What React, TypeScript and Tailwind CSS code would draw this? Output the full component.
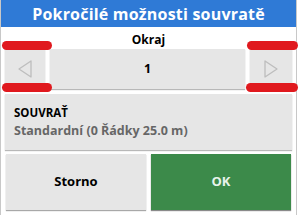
function Triangle({ dir }: { dir: "left" | "right" }) {
  return (
    <svg width="16" height="20" viewBox="0 0 16 20" fill="none">
      {dir === "left" ? (
        <path d="M14 2 L2 10 L14 18 Z" stroke="#bdbdbd" strokeWidth="1.3" strokeLinejoin="round" />
      ) : (
        <path d="M2 2 L14 10 L2 18 Z" stroke="#bdbdbd" strokeWidth="1.3" strokeLinejoin="round" />
      )}
    </svg>
  );
}

export default function App() {
  return (
    <div className="w-[300px] h-[215px] bg-white overflow-hidden" style={{ fontFamily: '"Open Sans", "Noto Sans", sans-serif' }}>
      <div className="relative w-[297px] h-[215px] border-l border-r border-[#c8c8c8] bg-white flex flex-col">
        <div className="h-[27px] bg-[#2f7ad6] flex items-center justify-center text-white font-bold text-[16px] leading-none tracking-[0.2px]">
          Pokročilé možnosti souvratě
        </div>
        <div className="h-[20px] flex items-end justify-center text-[12px] font-bold text-black leading-none pb-[1px]">
          Okraj
        </div>
        <div className="flex gap-[5px] px-[4px] mt-[2px] h-[40px]">
          <div className="w-[40px] bg-[#e6e6e6] shadow-[0_1px_1px_#b8b8b8] flex items-center justify-center">
            <Triangle dir="left" />
          </div>
          <div className="flex-1 bg-[#e6e6e6] shadow-[0_1px_1px_#b8b8b8] flex items-center justify-center text-[12.5px] font-bold text-black">
            1
          </div>
          <div className="w-[42px] bg-[#e6e6e6] shadow-[0_1px_1px_#b8b8b8] flex items-center justify-center">
            <Triangle dir="right" />
          </div>
        </div>
        <div className="mx-[4px] mt-[5px] h-[56px] bg-[#e6e6e6] shadow-[0_1px_1px_#b8b8b8] flex flex-col justify-center px-[9px] gap-[3px]">
          <div className="text-[11.5px] font-bold text-black leading-[14px]">SOUVRAŤ</div>
          <div className="text-[12.5px] font-bold text-[#666666] leading-[15px]">Standardní (0 Řádky 25.0 m)</div>
        </div>
        <div className="flex gap-[5px] mx-[5px] mt-[4px] h-[56px]">
          <div className="flex-1 bg-[#e6e6e6] shadow-[0_1px_1px_#a8a8a8] flex items-center justify-center text-[13px] font-bold text-black">
            Storno
          </div>
          <div className="flex-1 bg-[#3c8a4a] shadow-[0_1px_1px_#8a8a8a] flex items-center justify-center text-[13px] font-bold text-[#e8f3ea]">
            OK
          </div>
        </div>
        <div className="absolute left-[1px] top-[41px] w-[50px] h-[9px] rounded-full bg-[#e0191e]" />
        <div className="absolute left-[1px] top-[83px] w-[50px] h-[9px] rounded-full bg-[#e0191e]" />
        <div className="absolute left-[246px] top-[41px] w-[51px] h-[9px] rounded-full bg-[#e0191e]" />
        <div className="absolute left-[245px] top-[83px] w-[52px] h-[9px] rounded-full bg-[#e0191e]" />
      </div>
    </div>
  );
}
